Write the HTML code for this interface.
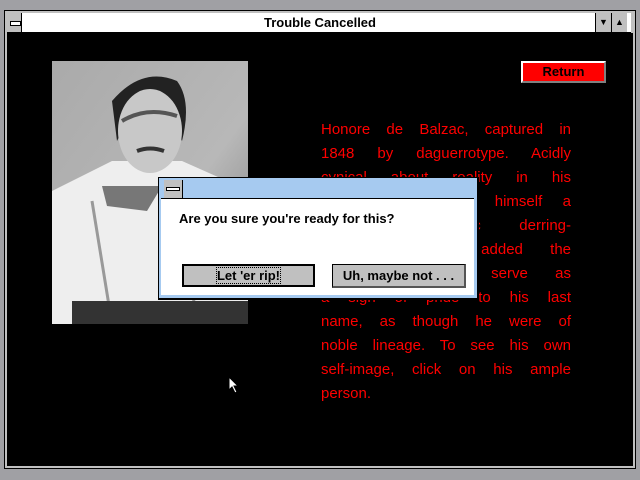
<!DOCTYPE html>
<html><head><style>
body{margin:0;width:640px;height:480px;background:#a0a0a4;position:relative;overflow:hidden;font-family:"Liberation Sans",sans-serif}
.a{position:absolute}
.txt{position:absolute;left:321px;width:250px;color:#f00;font-size:15px;line-height:24px;font-family:"Liberation Sans",sans-serif}
.txt div{text-align:justify;text-align-last:justify;white-space:nowrap;height:24px}
</style></head><body>
<div class="a" style="left:4px;top:10px;width:630px;height:457px;border:1px solid #000;background:#c0c0c0"></div>
<div class="a" style="left:7px;top:13px;width:624px;height:19px;background:#fff;border-bottom:1px solid #000"></div>
<div class="a" style="left:7px;top:13px;width:14px;height:19px;background:#c0c0c0;border-right:1px solid #000"></div>
<div class="a" style="left:10px;top:21px;width:9px;height:3px;border:1px solid #000;background:#fff"></div>
<div class="a" style="left:0;top:13px;width:640px;text-align:center;font-weight:bold;font-size:13px;line-height:19px">Trouble Cancelled</div>
<div class="a" style="left:595px;top:13px;width:15px;height:19px;background:#c0c0c0;border-left:1px solid #000;font-size:9px;text-align:center;line-height:19px">▼</div>
<div class="a" style="left:611px;top:13px;width:15px;height:19px;background:#c0c0c0;border-left:1px solid #000;font-size:9px;text-align:center;line-height:19px">▲</div>
<div class="a" style="left:7px;top:33px;width:626px;height:433px;background:#000"></div>

<svg class="a" style="left:52px;top:61px" width="196" height="263">
<defs><linearGradient id="bg" x1="0" y1="0" x2="1" y2="1"><stop offset="0" stop-color="#aaa"/><stop offset="0.6" stop-color="#b8b8b8"/><stop offset="1" stop-color="#777"/></linearGradient></defs>
<rect width="196" height="263" fill="url(#bg)"/>
<path d="M0 130 L60 100 L90 100 L130 100 L175 120 L196 135 L196 263 L0 263Z" fill="#eee"/>
<path d="M60 40 Q90 5 125 20 Q140 40 130 80 L120 60 L75 60 L65 80Z" fill="#222"/>
<ellipse cx="98" cy="70" rx="32" ry="42" fill="#c8c8c8"/>
<path d="M70 60 Q95 45 125 55" stroke="#555" stroke-width="4" fill="none"/>
<path d="M85 90 Q98 85 112 90" stroke="#333" stroke-width="4" fill="none"/>
<path d="M50 125 L110 125 L95 150 L55 145Z" fill="#777"/>
<path d="M40 140 L60 263 M150 130 L140 263" stroke="#999" stroke-width="3"/>
<rect x="20" y="240" width="176" height="23" fill="#333"/>
</svg>

<div class="a" style="left:521px;top:61px;width:81px;height:18px;background:#f00;border:2px solid #fff;border-right-color:#808080;border-bottom-color:#808080;font-size:13px;font-weight:bold;text-align:center;line-height:18px">Return</div>

<div class="txt" style="top:118px">
<div>Honore de Balzac, captured in</div>
<div>1848 by daguerrotype. Acidly</div>
<div>cynical about reality in his</div>
<div>writing, he fancied himself a</div>
<div>man of heroic derring-</div>
<div>do, and even added the</div>
<div>particle "de" to serve as</div>
<div>a sign of pride to his last</div>
<div>name, as though he were of</div>
<div>noble lineage. To see his own</div>
<div>self-image, click on his ample</div>
<div style="text-align-last:left">person.</div>
</div>

<div class="a" style="left:158px;top:177px;width:318px;height:120px;background:#a6caf0;border:1px solid #000;border-right-width:2px;border-bottom-width:2px"></div>
<div class="a" style="left:161px;top:180px;width:313px;height:114px;background:#fff;border-top:1px solid #000"></div>
<div class="a" style="left:161px;top:180px;width:313px;height:18px;background:#a6caf0;border-bottom:1px solid #000"></div>
<div class="a" style="left:164px;top:180px;width:18px;height:18px;background:#c0c0c0;border-right:1px solid #000"></div>
<div class="a" style="left:166px;top:187px;width:12px;height:2px;border:1px solid #000;background:#fff"></div>
<div class="a" style="left:179px;top:211px;font-size:13px;font-weight:bold">Are you sure you're ready for this?</div>
<div class="a" style="left:182px;top:264px;width:129px;height:19px;background:#c0c0c0;border:2px solid #000;font-size:13px;font-weight:bold;text-align:center;line-height:19px"><span style="outline:1px dotted #000">Let 'er rip!</span></div>
<div class="a" style="left:332px;top:264px;width:131px;height:21px;background:#c0c0c0;border:1px solid #000;border-right:2px solid #555;border-bottom:2px solid #555;font-size:13px;font-weight:bold;text-align:center;line-height:21px">Uh, maybe not . . .</div>

<svg class="a" style="left:228px;top:376px" width="12" height="20"><path d="M1 1 L1 14 L4 11 L7 17 L9 16 L6 10 L10 10Z" fill="#fff" stroke="#000" stroke-width="1"/></svg>
</body></html>
